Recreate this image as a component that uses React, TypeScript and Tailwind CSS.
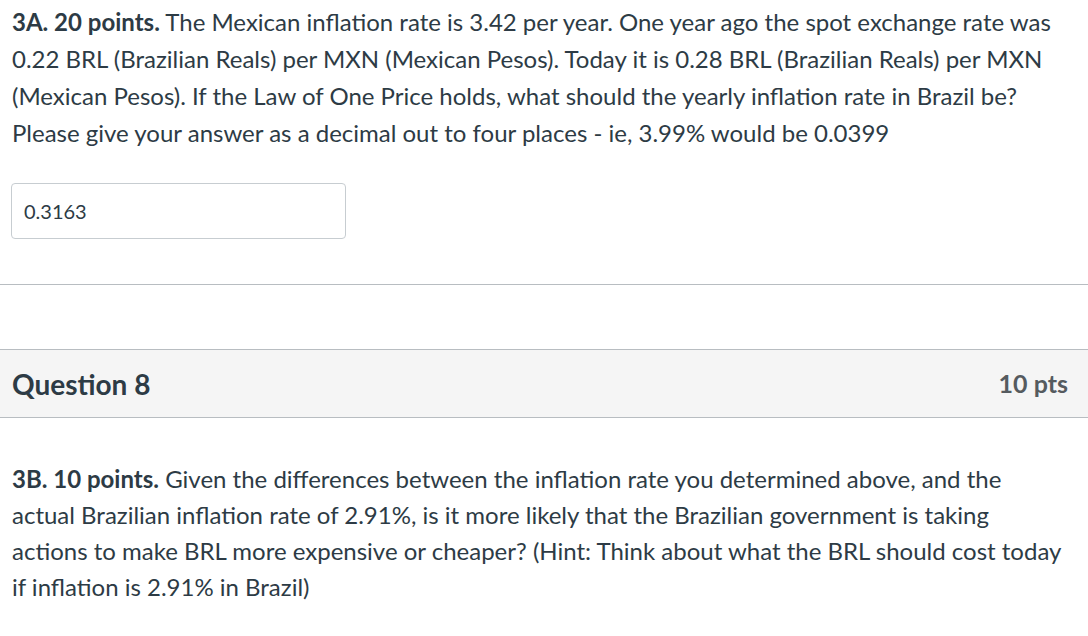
export default function App() {
  return (
    <div className="w-[1088px] h-[636px] overflow-hidden bg-white text-[#2d3b45]" style={{ fontFamily: 'Lato, "Open Sans", sans-serif' }}>
      <div className="px-3 pt-[3px] text-[24px] leading-[37px]">
        <p>
          <strong className="font-bold">3A. 20 points.</strong> The Mexican inflation rate is 3.42 per year. One year ago the spot exchange rate was 0.22 BRL (Brazilian Reals) per MXN (Mexican Pesos). Today it is 0.28 BRL (Brazilian Reals) per MXN (Mexican Pesos). If the Law of One Price holds, what should the yearly inflation rate in Brazil be? Please give your answer as a decimal out to four places - ie, 3.99% would be 0.0399
        </p>
      </div>
      <div className="pl-[11px] mt-[32px]">
        <div className="w-[335px] h-[56px] border border-[#c7cdd1] rounded-[4px] flex items-center px-3 text-[20px]">
          0.3163
        </div>
      </div>
      <div className="mt-[45px] border-t border-[#b8bdc1]" />
      <div className="mt-[64px] h-[69px] border-y border-[#b8bdc1] bg-[#f5f5f5] flex items-center justify-between px-3">
        <div className="text-[28px] font-bold">Question 8</div>
        <div className="text-[25px] font-bold text-[#555b5f] pr-[8px]">10 pts</div>
      </div>
      <div className="pl-3 pr-[22px] pt-[43px] text-[24px] leading-[36px]">
        <p>
          <strong className="font-bold">3B. 10 points.</strong> Given the differences between the inflation rate you determined above, and the actual Brazilian inflation rate of 2.91%, is it more likely that the Brazilian government is taking actions to make BRL more expensive or cheaper? (Hint: Think about what the BRL should cost today if inflation is 2.91% in Brazil)
        </p>
      </div>
    </div>
  );
}
